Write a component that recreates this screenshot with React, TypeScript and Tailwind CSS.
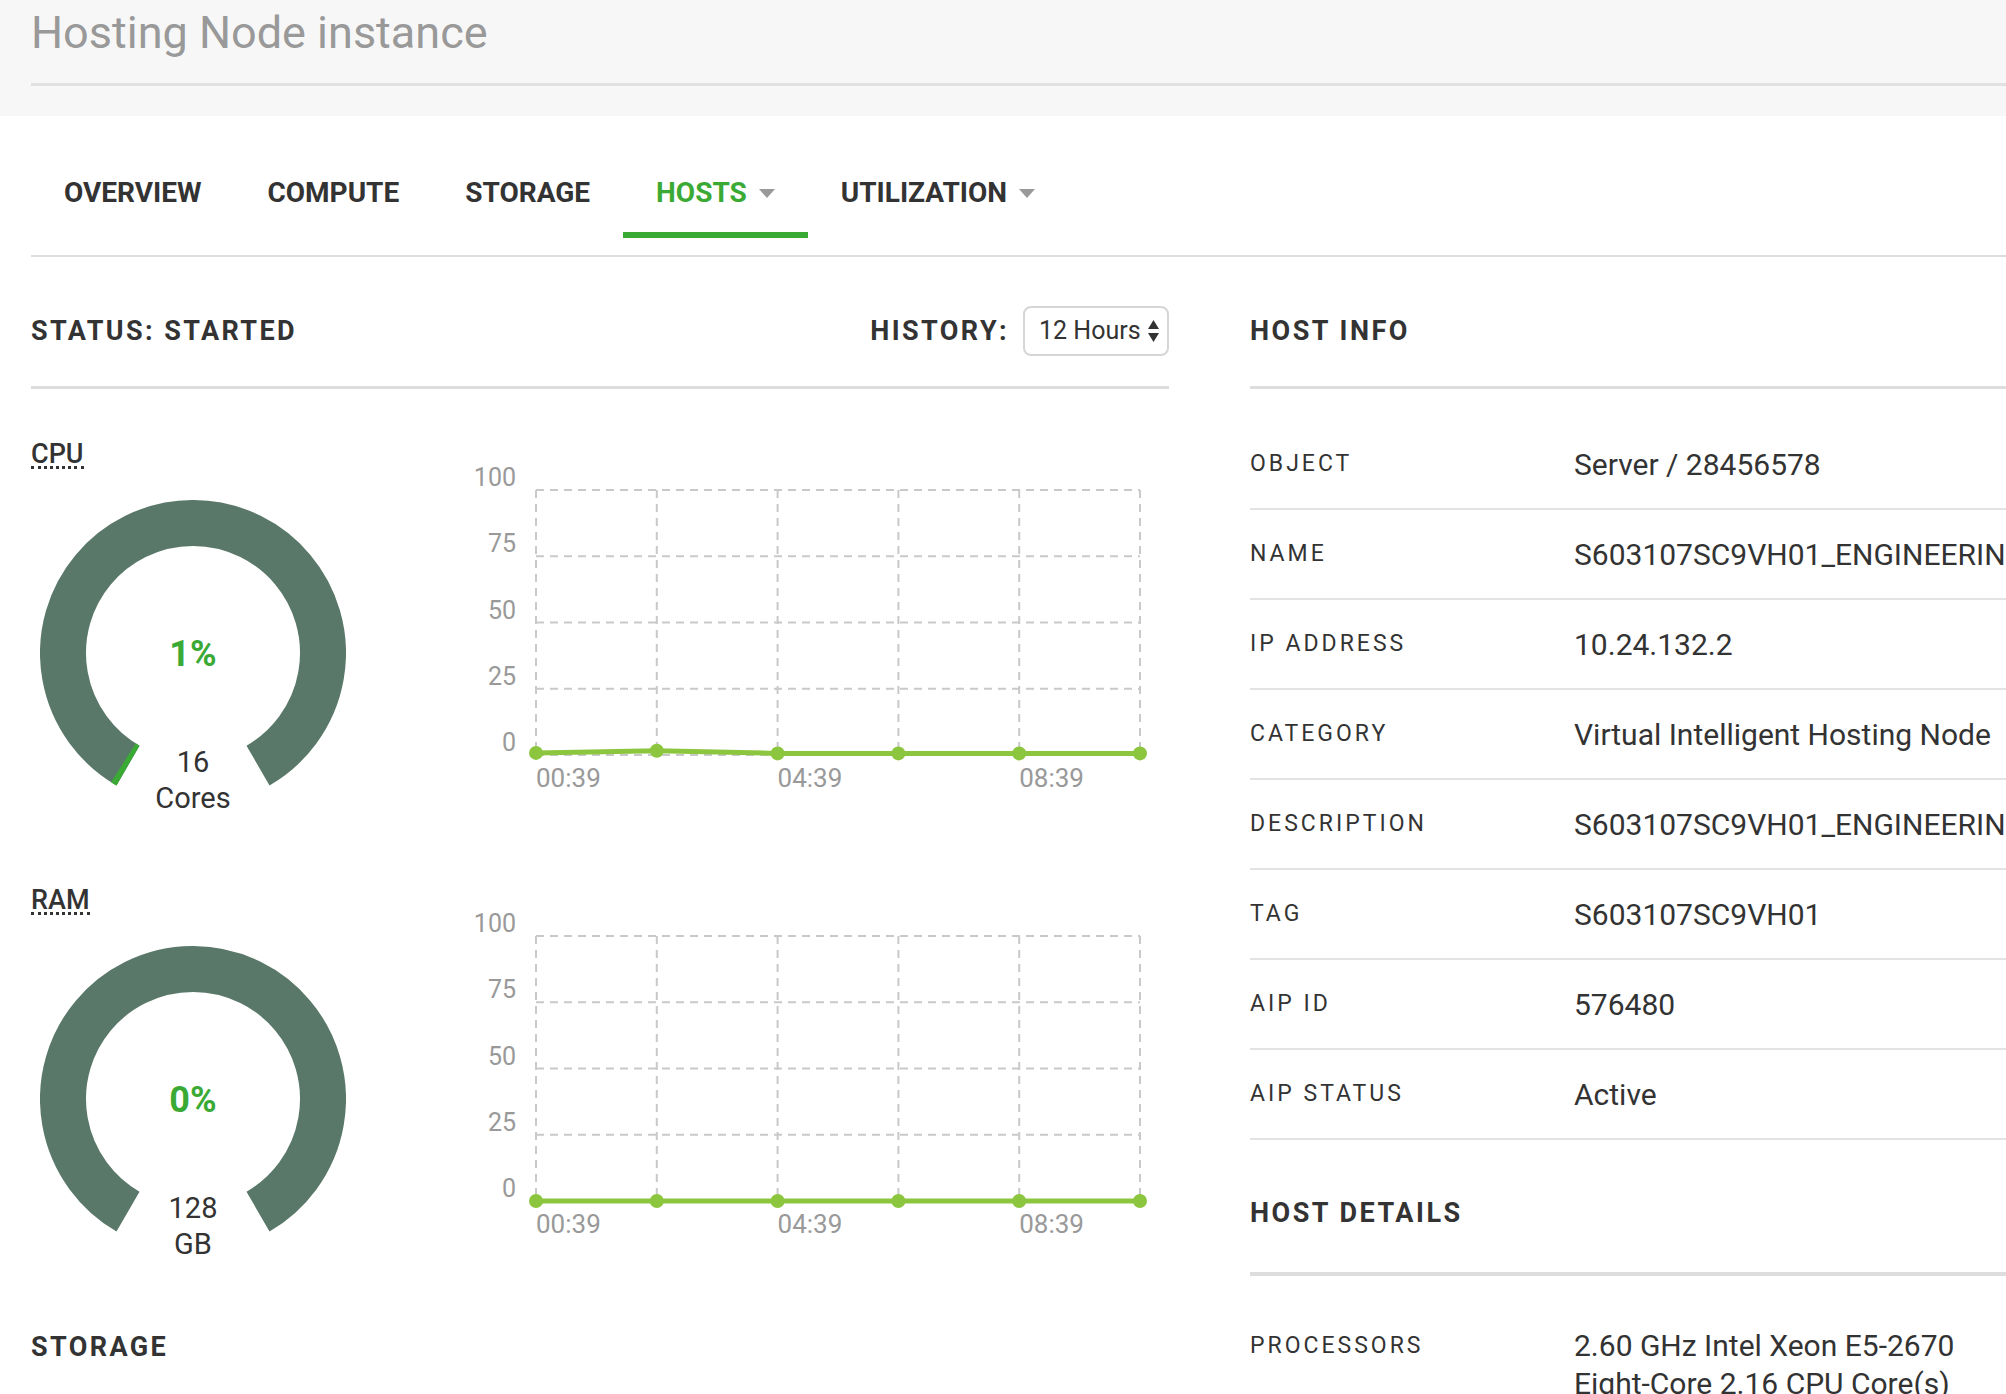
import React from "react";

const GREEN = "#3aaa35";

function Caret() {
  return (
    <svg width="16" height="9" viewBox="0 0 16 9">
      <path d="M0 0 L16 0 L8 9 Z" fill="#999" />
    </svg>
  );
}

function Gauge({ pct, value, unit }: { pct: number; value: string; unit: string }) {
  const arc = "M 88 265.58 A 130 130 0 1 1 218 265.58";
  return (
    <div className="relative w-[306px] h-[306px] ml-[9px] mt-[25px]">
      <svg width="306" height="306" viewBox="0 0 306 306" className="block">
        <path d={arc} fill="none" stroke="#5a786a" strokeWidth="46" />
        {pct > 0 && (
          <path
            d={arc}
            fill="none"
            stroke={GREEN}
            strokeWidth="46"
            pathLength={100}
            strokeDasharray={`${pct * 0.8} 200`}
          />
        )}
      </svg>
      {/* readings over the ring */}
      <div className="absolute inset-x-0 top-[134px] text-center text-[36px] leading-[40px] font-bold text-[#3aaa35]">
        {pct}%
      </div>
      <div className="absolute inset-x-0 top-[244px] text-center text-[29px] leading-[36px] text-[#333]">
        <div>{value}</div>
        <div>{unit}</div>
      </div>
    </div>
  );
}

function Chart({ data }: { data: number[] }) {
  const xs = [96, 216.8, 337.6, 458.4, 579.2, 700];
  const ys = [55, 121.25, 187.5, 253.75, 320];
  const labels = ["100", "75", "50", "25", "0"];
  const pts = data.map((v, i) => [xs[i], 320 - v * 2.65]);
  return (
    <svg width="729" height="360" className="block shrink-0">
      {ys.map((y) => (
        <line key={"h" + y} x1={96} x2={700} y1={y} y2={y} stroke="#c9c9c9" strokeWidth="2" strokeDasharray="8 6" />
      ))}
      {xs.map((x) => (
        <line key={"v" + x} x1={x} x2={x} y1={55} y2={320} stroke="#c9c9c9" strokeWidth="2" strokeDasharray="8 6" />
      ))}
      {labels.map((l, i) => (
        <text key={l} x={76} y={ys[i] - 4} textAnchor="end" fontSize="25" fill="#999">
          {l}
        </text>
      ))}
      {["00:39", "04:39", "08:39"].map((t, i) => (
        <text key={t} x={xs[i * 2]} y={352} fontSize="26" fill="#999">
          {t}
        </text>
      ))}
      <polyline points={pts.map((p) => p.join(",")).join(" ")} fill="none" stroke="#8cc63f" strokeWidth="5" />
      {pts.map((p, i) => (
        <circle key={i} cx={p[0]} cy={p[1]} r="7" fill="#8cc63f" />
      ))}
    </svg>
  );
}

function Metric({ label, pct, value, unit, data }: { label: string; pct: number; value: string; unit: string; data: number[] }) {
  return (
    <div className="flex h-[446px]">
      <div className="w-[409px] shrink-0">
        <div className="h-[40px] flex items-center">
          <span className="inline-block text-[27px] leading-[24px] font-medium text-[#333] border-b-[3px] border-dotted border-[#333]">
            {label}
          </span>
        </div>
        <Gauge pct={pct} value={value} unit={unit} />
      </div>
      <Chart data={data} />
    </div>
  );
}

const info = [
  ["OBJECT", "Server / 28456578"],
  ["NAME", "S603107SC9VH01_ENGINEERING_HOSTING_NODE"],
  ["IP ADDRESS", "10.24.132.2"],
  ["CATEGORY", "Virtual Intelligent Hosting Node"],
  ["DESCRIPTION", "S603107SC9VH01_ENGINEERING_HOSTING_NODE"],
  ["TAG", "S603107SC9VH01"],
  ["AIP ID", "576480"],
  ["AIP STATUS", "Active"],
];

export default function App() {
  const tabs = [
    { name: "OVERVIEW" },
    { name: "COMPUTE" },
    { name: "STORAGE" },
    { name: "HOSTS", active: true, caret: true },
    { name: "UTILIZATION", caret: true },
  ];

  return (
    <div className="w-[2006px] h-[1394px] overflow-hidden bg-white text-[#333] font-['Roboto','Liberation_Sans',sans-serif]">
      {/* page title */}
      <div className="bg-[#f7f7f7] h-[116px] pl-[31px]">
        <div className="h-[66px] flex items-center text-[45px] text-[#999]">Hosting Node instance</div>
        <div className="mt-[17px] h-[3px] bg-[#e1e1e1]" />
      </div>

      {/* tabs */}
      <div className="ml-[31px] flex border-b-2 border-[#dddddd] pb-[17px]">
        {tabs.map((t) => (
          <div
            key={t.name}
            className={
              t.active
                ? "px-[33px] pt-[57px] pb-[19px] border-b-[6px] border-[#3aaa35] text-[#3aaa35]"
                : "px-[33px] pt-[57px] pb-[19px] border-b-[6px] border-transparent text-[#333]"
            }
          >
            <div className="h-[40px] flex items-center gap-[12px] text-[28px] font-bold">
              {t.name}
              {t.caret && <Caret />}
            </div>
          </div>
        ))}
      </div>

      <div className="flex pl-[31px]">
        {/* left: status + charts */}
        <div className="w-[1138px] shrink-0">
          <div className="pt-[49px] pb-[30px] border-b-[3px] border-[#dddddd]">
            <div className="h-[50px] flex items-center justify-between">
              <div className="text-[27px] font-bold tracking-[2.4px]">STATUS: STARTED</div>
              <div className="flex items-center gap-[14px]">
                <span className="text-[27px] font-bold tracking-[2.4px]">HISTORY:</span>
                <div className="w-[146px] h-[50px] rounded-[8px] border-2 border-[#d6d6d6] flex items-center justify-between pl-[14px] pr-[8px]">
                  <span className="text-[25px]">12 Hours</span>
                  <svg width="11" height="22" viewBox="0 0 11 22">
                    <path d="M5.5 0 L11 9 L0 9 Z M0 13 L11 13 L5.5 22 Z" fill="#333" />
                  </svg>
                </div>
              </div>
            </div>
          </div>

          <div className="pt-[46px]">
            <Metric label="CPU" pct={1} value="16" unit="Cores" data={[0.8, 1.6, 0.6, 0.6, 0.6, 0.6]} />
            <Metric label="RAM" pct={0} value="128" unit="GB" data={[0, 0, 0, 0, 0, 0]} />
            <div className="h-[40px] flex items-center text-[27px] font-bold tracking-[2.4px]">STORAGE</div>
          </div>
        </div>

        {/* right: host info */}
        <div className="w-[1000px] shrink-0 ml-[81px]">
          <div className="pt-[49px] pb-[30px] border-b-[3px] border-[#dddddd]">
            <div className="h-[50px] flex items-center text-[27px] font-bold tracking-[2.5px]">HOST INFO</div>
          </div>

          <div className="mt-[31px]">
            {info.map(([k, v]) => (
              <div key={k} className="h-[90px] flex items-center border-b-2 border-[#e3e3e3]">
                <div className="w-[324px] shrink-0 text-[23px] tracking-[3px]">{k}</div>
                <div className="text-[30px] whitespace-nowrap">{v}</div>
              </div>
            ))}
          </div>

          <div className="pt-[48px] pb-[34px] border-b-4 border-[#dddddd]">
            <div className="h-[50px] flex items-center text-[27px] font-bold tracking-[2.5px]">HOST DETAILS</div>
          </div>

          <div className="mt-[51px] flex">
            <div className="w-[324px] shrink-0 text-[23px] leading-[38px] tracking-[3px]">PROCESSORS</div>
            <div className="text-[30px] leading-[38px]">
              <div>2.60 GHz Intel Xeon E5-2670</div>
              <div>Eight-Core 2.16 CPU Core(s)</div>
            </div>
          </div>
        </div>
      </div>
    </div>
  );
}
